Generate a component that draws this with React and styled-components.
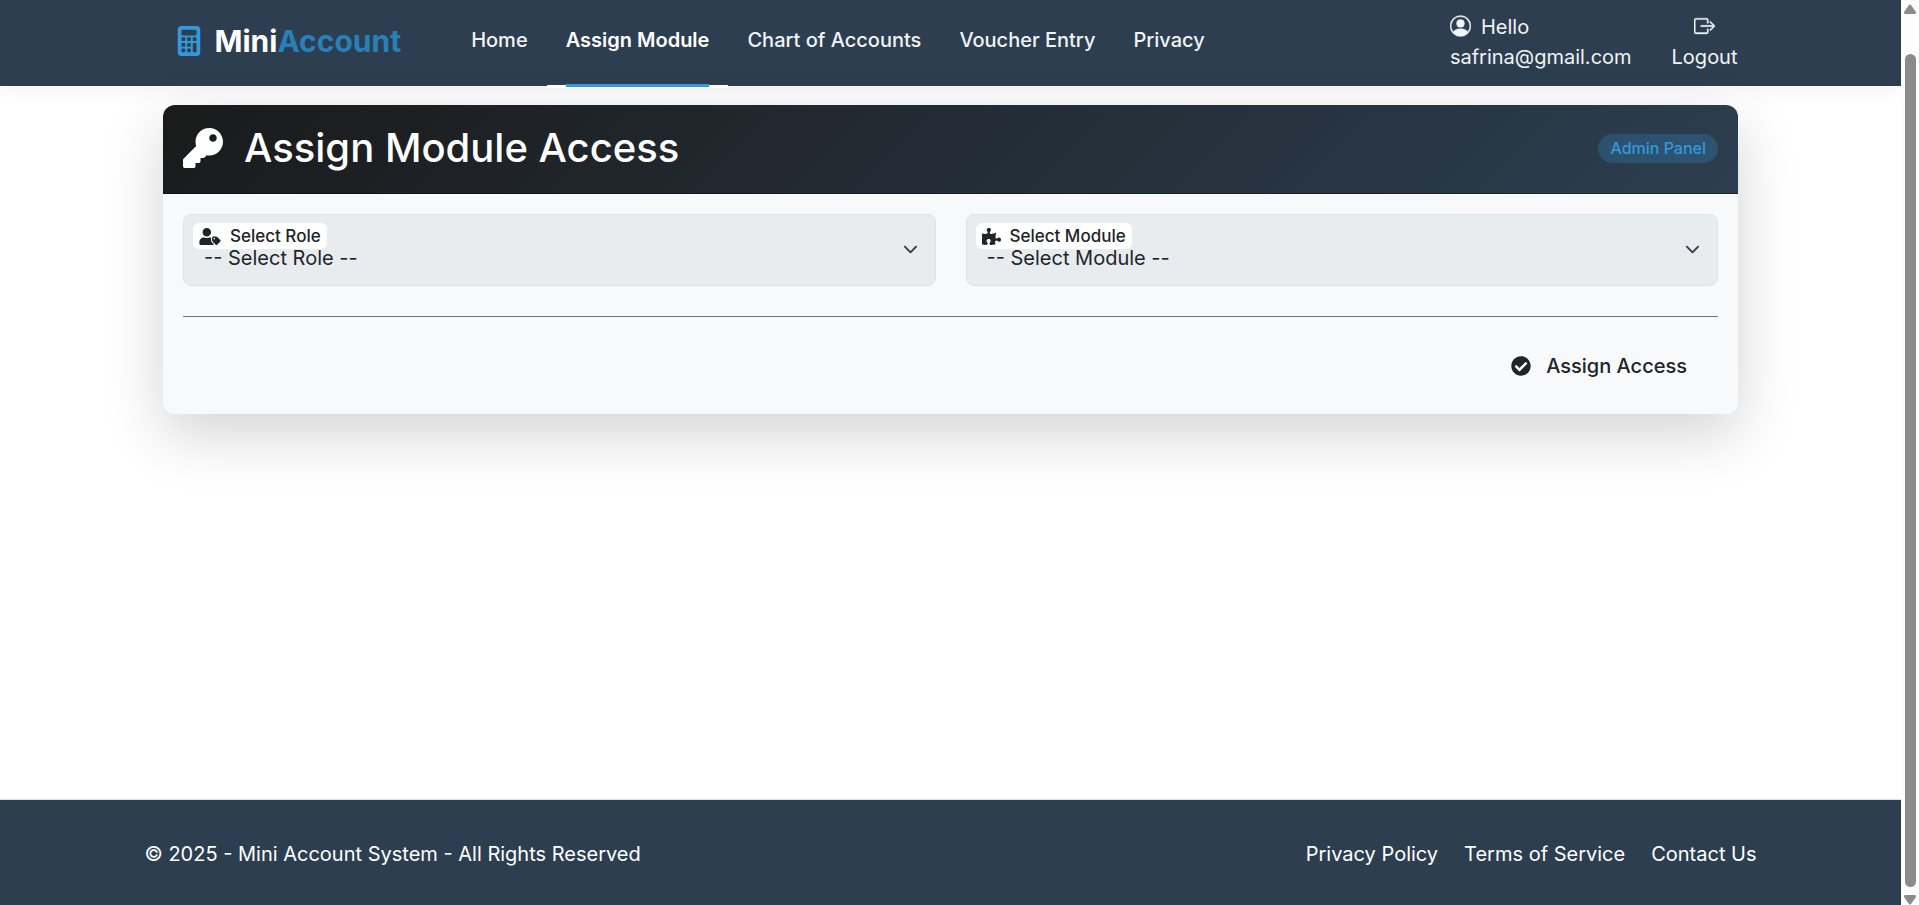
import React, { useState } from "react";
import styled, { createGlobalStyle } from "styled-components";
import { BsCalculatorFill, BsPersonCircle, BsBoxArrowRight } from "react-icons/bs";
import { FaKey, FaUserTag, FaPuzzlePiece, FaCheckCircle } from "react-icons/fa";

const GlobalStyle = createGlobalStyle`
  *, *::before, *::after { box-sizing: border-box; }
  body {
    margin: 0;
    background: #fff;
    color: #212529;
    font-family: Inter, "Liberation Sans", sans-serif;
    font-size: 20px;
    line-height: 30px;
  }
  a { color: inherit; text-decoration: none; }
  button, select { font: inherit; color: inherit; }
`;

const Shell = styled.div`
  display: grid;
  grid-template-columns: minmax(0, 1fr) 18px;
  min-height: 100vh;
`;

const Page = styled.div`
  display: flex;
  flex-direction: column;
  min-height: 0;
`;

const Header = styled.header`
  background: #2c3e50;
  color: #fff;
  box-shadow: 0 4px 20px rgba(0, 0, 0, 0.05);
`;

const HeaderInner = styled.div`
  display: flex;
  align-items: flex-start;
  max-width: 1650px;
  height: 86px;
  margin: 0 auto;
  padding: 0 38px 0 48px;
`;

const Brand = styled.a`
  display: flex;
  align-items: center;
  gap: 11px;
  margin-top: 18px;
  font-size: 30px;
  line-height: 46px;
  font-weight: 700;
`;

const BrandAccent = styled.span`
  color: #2980b9;
`;

const BrandIcon = styled(BsCalculatorFill)`
  color: #3498db;
`;

const Nav = styled.nav`
  display: flex;
  margin-left: 51px;
`;

const NavLink = styled.a`
  position: relative;
  height: 88px;
  padding: 25px 19px 0;
  font-weight: ${(p) => (p.$active ? 600 : 500)};
  color: ${(p) => (p.$active ? "#fff" : "#f1f3f4")};
  border-bottom: 3px solid ${(p) => (p.$active ? "#fff" : "transparent")};

  &::after {
    content: "";
    display: ${(p) => (p.$active ? "block" : "none")};
    position: absolute;
    left: 19px;
    right: 19px;
    bottom: -2px;
    height: 3px;
    background: #3498db;
  }
`;

const Account = styled.div`
  display: flex;
  gap: 40px;
  margin: 12px 0 0 auto;
  color: #f1f3f4;
`;

const UserLink = styled.a`
  display: block;
`;

const UserLine = styled.span`
  display: flex;
  align-items: center;
  gap: 10px;

  svg {
    height: 30px;
    padding-bottom: 2px;
    stroke: currentColor;
    stroke-width: 0.3;
  }
`;

const LogoutButton = styled.button`
  display: flex;
  flex-direction: column;
  align-items: center;
  padding: 0;
  border: 0;
  background: none;
  cursor: pointer;

  svg {
    height: 30px;
    padding-bottom: 2px;
    stroke: currentColor;
    stroke-width: 0.3;
  }
`;

const Main = styled.main`
  flex: 1;
  width: 100%;
  max-width: 1575px;
  margin: 0 auto;
  padding-top: 19px;
`;

const Card = styled.section`
  overflow: hidden;
  border-radius: 12px;
  background: #f8f9fb;
  box-shadow: 0 20px 60px rgba(0, 0, 0, 0.175);
`;

const CardHeader = styled.div`
  display: flex;
  align-items: center;
  justify-content: space-between;
  height: 89px;
  padding: 0 20px 2px;
  background: linear-gradient(135deg, #1a1a1a, #2c3e50);
  border-bottom: 1px solid rgba(0, 0, 0, 0.3);
  color: #fff;
`;

const Title = styled.h1`
  display: flex;
  align-items: center;
  gap: 21px;
  margin: 0;
  font-size: 40px;
  line-height: 48px;
  font-weight: 500;
`;

const Badge = styled.span`
  padding: 0 12px;
  border-radius: 15px;
  background: rgba(52, 152, 219, 0.25);
  color: #3498db;
  font-size: 16px;
  line-height: 29px;
  font-weight: 500;
`;

const Form = styled.form`
  padding: 20px 20px 18px;
`;

const Fields = styled.div`
  display: grid;
  grid-template-columns: 1fr 1fr;
  gap: 30px;
`;

const Field = styled.div`
  position: relative;
`;

const FieldLabel = styled.label`
  position: absolute;
  top: 9px;
  left: 10px;
  display: flex;
  align-items: center;
  gap: 9px;
  padding: 0 6px;
  border-radius: 6px;
  background: #fff;
  font-size: 17px;
  line-height: 26px;
  font-weight: 500;
`;

const RoleIcon = styled(FaUserTag)`
  width: 22px;
  height: 17px;
`;

const ModuleIcon = styled(FaPuzzlePiece)`
  width: 19px;
  height: 17px;
`;

const Select = styled.select`
  display: block;
  width: 100%;
  height: 72px;
  padding: 30px 45px 14px 20px;
  border: 1px solid #dee2e6;
  border-radius: 8px;
  background: #e9ecef;
  line-height: 26px;
  appearance: none;
`;

const Chevron = styled.svg`
  position: absolute;
  top: 28px;
  right: 18px;
  width: 15px;
  height: 15px;
  pointer-events: none;
`;

const Divider = styled.hr`
  margin: 30px 0 19px;
  border: 0;
  border-top: 1px solid #6c757d;
`;

const Actions = styled.div`
  display: flex;
  justify-content: flex-end;
`;

const SubmitButton = styled.button`
  display: flex;
  align-items: center;
  gap: 15px;
  height: 60px;
  padding: 0 31px;
  border: 0;
  background: none;
  font-weight: 500;
  cursor: pointer;
`;

const Footer = styled.footer`
  padding: 39px 0 36px;
  border-top: 1px solid #dee2e6;
  background: #2c3e50;
  color: #fff;
`;

const FooterInner = styled.div`
  display: flex;
  justify-content: space-between;
  max-width: 1612px;
  margin: 0 auto;
`;

const FooterLinks = styled.nav`
  display: flex;
  gap: 26px;
`;

const Scrollbar = styled.div`
  display: flex;
  flex-direction: column;
  align-items: center;
  padding-top: 4px;
  background: #fcfcfc;
`;

const ScrollThumb = styled.div`
  flex: 1;
  width: 11px;
  margin: 40px 0 8px;
  border-radius: 6px;
  background: #8b8b8b;
`;

const ScrollArrow = styled.svg`
  display: block;
  width: 12px;
  height: 10px;
  fill: #8b8b8b;
`;

const links = ["Home", "Assign Module", "Chart of Accounts", "Voucher Entry", "Privacy"];

function SelectField({ id, label, icon }) {
  const [value, setValue] = useState("");
  return (
    <Field>
      <Select id={id} value={value} onChange={(e) => setValue(e.target.value)}>
        <option value="">{`-- ${label} --`}</option>
      </Select>
      <FieldLabel htmlFor={id}>
        {icon}
        {label}
      </FieldLabel>
      <Chevron viewBox="0 0 16 16" fill="none" stroke="#343a40" strokeWidth="2" strokeLinecap="round" strokeLinejoin="round" aria-hidden="true">
        <path d="m2 5 6 6 6-6" />
      </Chevron>
    </Field>
  );
}

export default function App() {
  return (
    <>
      <GlobalStyle />
      <Shell>
        <Page>
          <Header>
            <HeaderInner>
              <Brand href="#">
                <BrandIcon size={30} />
                <span>Mini<BrandAccent>Account</BrandAccent></span>
              </Brand>
              <Nav>
                {links.map((l) => (
                  <NavLink key={l} href="#" $active={l === "Assign Module"}>{l}</NavLink>
                ))}
              </Nav>
              <Account>
                <UserLink href="#">
                  <UserLine><BsPersonCircle size={21} />Hello</UserLine>
                  safrina@gmail.com
                </UserLink>
                <LogoutButton type="button">
                  <BsBoxArrowRight size={21} />
                  Logout
                </LogoutButton>
              </Account>
            </HeaderInner>
          </Header>
          <Main>
            <Card>
              <CardHeader>
                <Title><FaKey />Assign Module Access</Title>
                <Badge>Admin Panel</Badge>
              </CardHeader>
              <Form onSubmit={(e) => e.preventDefault()}>
                <Fields>
                  <SelectField id="role" label="Select Role" icon={<RoleIcon />} />
                  <SelectField id="module" label="Select Module" icon={<ModuleIcon />} />
                </Fields>
                <Divider />
                <Actions>
                  <SubmitButton type="submit"><FaCheckCircle size={20} />Assign Access</SubmitButton>
                </Actions>
              </Form>
            </Card>
          </Main>
          <Footer>
            <FooterInner>
              <span>© 2025 - Mini Account System - All Rights Reserved</span>
              <FooterLinks>
                <a href="#">Privacy Policy</a>
                <a href="#">Terms of Service</a>
                <a href="#">Contact Us</a>
              </FooterLinks>
            </FooterInner>
          </Footer>
        </Page>
        <Scrollbar aria-hidden="true">
          <ScrollArrow viewBox="0 0 12 10"><path d="M5 1Q6 0 7 1L12 8Q12 10 11 10H1Q0 10 0 8Z" /></ScrollArrow>
          <ScrollThumb />
          <ScrollArrow viewBox="0 0 12 10"><path d="M5 9Q6 10 7 9L12 2Q12 0 11 0H1Q0 0 0 2Z" /></ScrollArrow>
        </Scrollbar>
      </Shell>
    </>
  );
}
